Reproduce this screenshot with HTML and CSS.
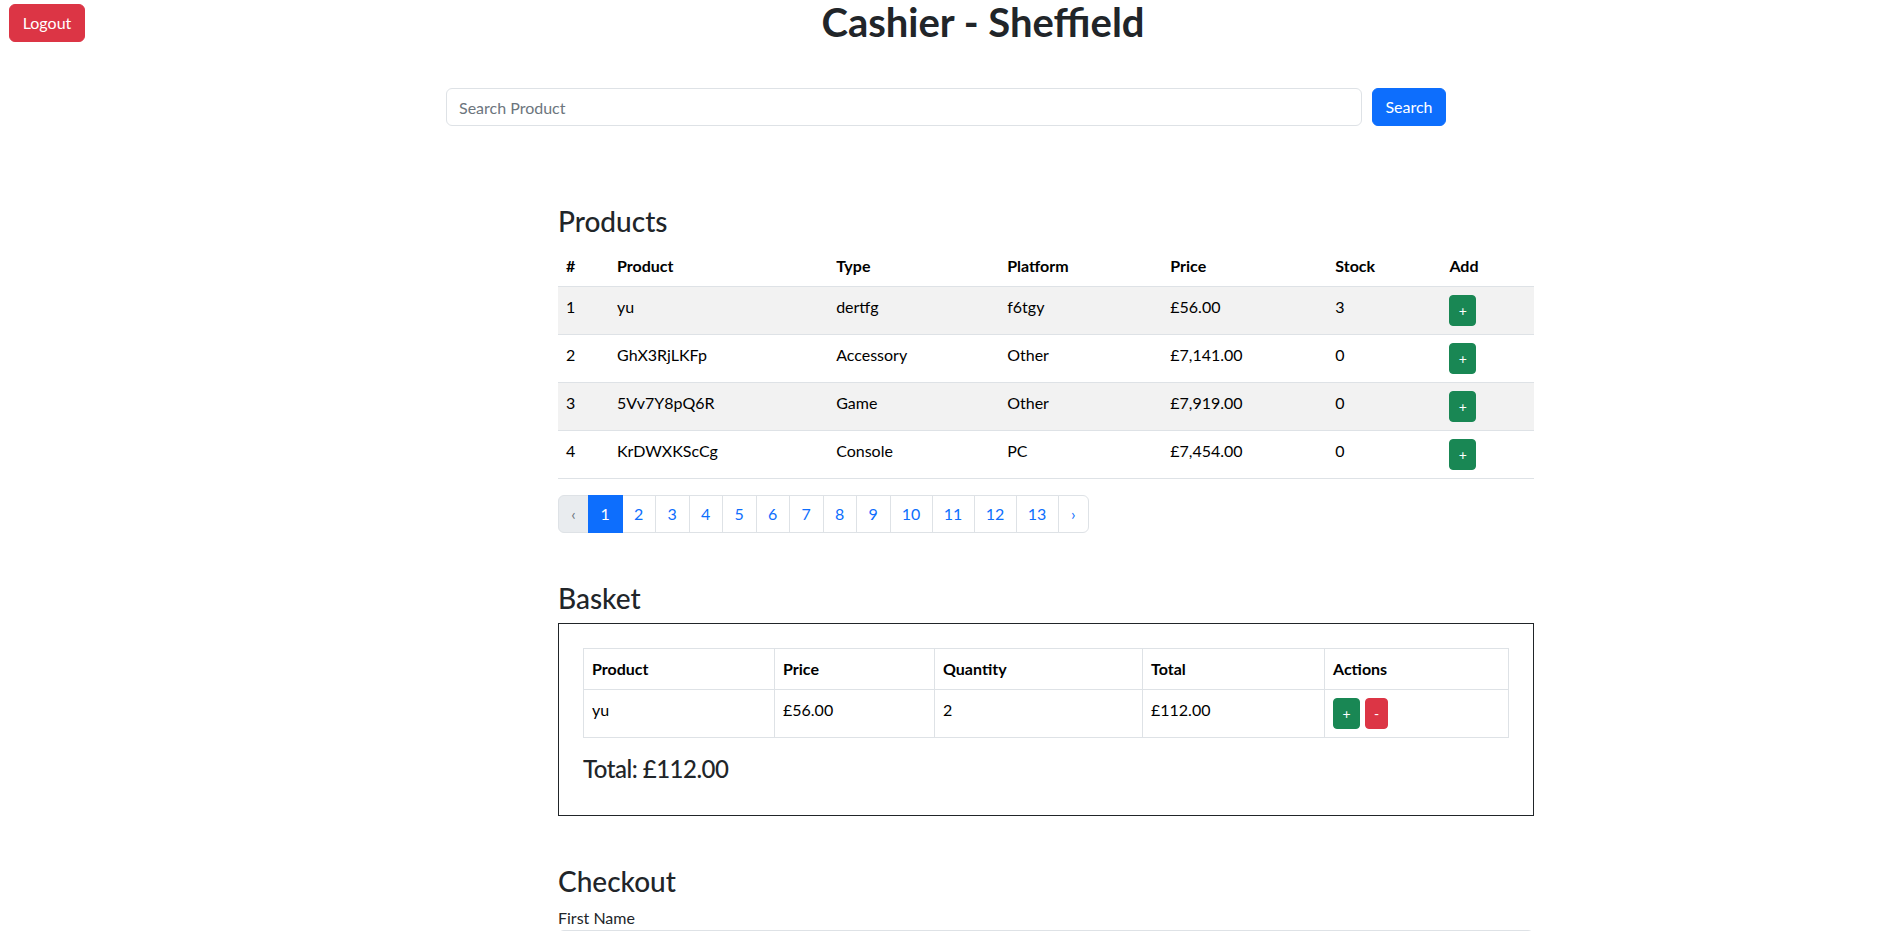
FILE: index.html
```html
<!DOCTYPE html>
<html lang="en">
<head>
<meta charset="utf-8">
<title>Cashier - Sheffield</title>
<link rel="stylesheet" href="styles.css">
</head>
<body>
<header class="topbar">
  <button class="btn btn-danger btn-logout">Logout</button>
  <h1 class="page-title">Cashier - Sheffield</h1>
</header>

<form class="search-row">
  <input class="form-control search-input" type="text" placeholder="Search Product">
  <button class="btn btn-primary btn-search" type="button">Search</button>
</form>

<main class="content">
  <section class="products">
    <h3 class="section-title">Products</h3>
    <table class="table table-striped products-table">
      <thead>
        <tr>
          <th class="c-num">#</th>
          <th class="c-prod">Product</th>
          <th class="c-type">Type</th>
          <th class="c-plat">Platform</th>
          <th class="c-price">Price</th>
          <th class="c-stock">Stock</th>
          <th class="c-add">Add</th>
        </tr>
      </thead>
      <tbody>
        <tr><td>1</td><td>yu</td><td>dertfg</td><td>f6tgy</td><td>£56.00</td><td>3</td><td><button class="btn btn-success btn-sm btn-plus">+</button></td></tr>
        <tr><td>2</td><td>GhX3RjLKFp</td><td>Accessory</td><td>Other</td><td>£7,141.00</td><td>0</td><td><button class="btn btn-success btn-sm btn-plus">+</button></td></tr>
        <tr><td>3</td><td>5Vv7Y8pQ6R</td><td>Game</td><td>Other</td><td>£7,919.00</td><td>0</td><td><button class="btn btn-success btn-sm btn-plus">+</button></td></tr>
        <tr><td>4</td><td>KrDWXKScCg</td><td>Console</td><td>PC</td><td>£7,454.00</td><td>0</td><td><button class="btn btn-success btn-sm btn-plus">+</button></td></tr>
      </tbody>
    </table>
    <ul class="pagination">
      <li class="page-item disabled"><span class="page-link pl-arrow">‹</span></li>
      <li class="page-item active"><span class="page-link pl-1">1</span></li>
      <li class="page-item"><a class="page-link pl-1">2</a></li>
      <li class="page-item"><a class="page-link pl-1">3</a></li>
      <li class="page-item"><a class="page-link pl-1">4</a></li>
      <li class="page-item"><a class="page-link pl-1">5</a></li>
      <li class="page-item"><a class="page-link pl-1">6</a></li>
      <li class="page-item"><a class="page-link pl-1">7</a></li>
      <li class="page-item"><a class="page-link pl-1">8</a></li>
      <li class="page-item"><a class="page-link pl-1">9</a></li>
      <li class="page-item"><a class="page-link pl-2">10</a></li>
      <li class="page-item"><a class="page-link pl-2">11</a></li>
      <li class="page-item"><a class="page-link pl-2">12</a></li>
      <li class="page-item"><a class="page-link pl-2">13</a></li>
      <li class="page-item"><a class="page-link pl-arrow">›</a></li>
    </ul>
  </section>

  <section class="basket">
    <h3 class="section-title">Basket</h3>
    <div class="basket-box">
      <table class="table table-bordered basket-table">
        <thead>
          <tr>
            <th class="b-prod">Product</th>
            <th class="b-price">Price</th>
            <th class="b-qty">Quantity</th>
            <th class="b-total">Total</th>
            <th class="b-act">Actions</th>
          </tr>
        </thead>
        <tbody>
          <tr>
            <td>yu</td>
            <td>£56.00</td>
            <td>2</td>
            <td>£112.00</td>
            <td><div class="actions"><button class="btn btn-success btn-sm btn-plus">+</button><button class="btn btn-danger btn-sm btn-minus">-</button></div></td>
          </tr>
        </tbody>
      </table>
      <h4 class="basket-total">Total: £112.00</h4>
    </div>
  </section>

  <section class="checkout">
    <h3 class="section-title">Checkout</h3>
    <label class="field-label" for="fname">First Name</label>
    <input class="form-control" id="fname" type="text">
  </section>
</main>
</body>
</html>
```

FILE: styles.css
```css
* { box-sizing: border-box; }

html, body {
  margin: 0;
  padding: 0;
}

body {
  font-family: "Lato", "Open Sans", "Noto Sans", sans-serif;
  font-size: 16px;
  line-height: 1.5;
  color: #212529;
  background: #fff;
}

/* buttons */
.btn {
  display: inline-block;
  font-family: inherit;
  font-size: 16px;
  line-height: 24px;
  padding: 6px 12px;
  border: 1px solid transparent;
  border-radius: 6px;
  color: #fff;
  text-align: center;
  cursor: pointer;
}
.btn-danger { background: #dc3545; border-color: #dc3545; }
.btn-primary { background: #0d6efd; border-color: #0d6efd; }
.btn-success { background: #198754; border-color: #198754; }
.btn-sm {
  font-size: 14px;
  line-height: 21px;
  padding: 4px 0;
  border-radius: 4px;
}
.btn-plus { width: 27px; }
.btn-minus { width: 23px; }

/* header */
.topbar {
  display: flex;
  align-items: flex-start;
  height: 44px;
}
.btn-logout {
  margin: 4px 0 0 9px;
  width: 76px;
  height: 38px;
  padding: 6px 0;
}
.page-title {
  flex: 1;
  margin: 0;
  padding-right: 6px;
  text-align: center;
  font-size: 40px;
  line-height: 44px;
  font-weight: 700;
  color: #212529;
}

/* search */
.search-row {
  display: flex;
  gap: 10px;
  width: 1000px;
  margin: 44px 0 0 446px;
}
.form-control {
  display: block;
  width: 100%;
  height: 38px;
  padding: 6px 12px;
  font-family: inherit;
  font-size: 16px;
  line-height: 24px;
  color: #212529;
  background: #fff;
  border: 1px solid #dee2e6;
  border-radius: 6px;
}
.form-control::placeholder { color: #6c757d; }
.search-input { flex: 1; }
.btn-search { width: 74px; height: 38px; padding: 6px 0; flex: none; }

/* content column */
.content {
  width: 975.5px;
  margin-left: 558px;
}
.section-title {
  margin: 0 0 8px;
  font-size: 28px;
  line-height: 34px;
  font-weight: 500;
  color: #212529;
}
.products { margin-top: 78px; }
.basket { margin-top: 48px; }
.checkout { margin-top: 48px; }

/* tables */
.table {
  width: 100%;
  border-collapse: collapse;
  table-layout: fixed;
  color: #000;
  margin-bottom: 16px;
}
.table th, .table td {
  padding: 8px;
  text-align: left;
  vertical-align: top;
  border-bottom: 1px solid #dee2e6;
}
.table th { font-weight: 700; }
.table-striped tbody tr:nth-child(odd) td { background: #f2f2f2; }

.c-num { width: 51px; }
.c-prod { width: 219px; }
.c-type { width: 171px; }
.c-plat { width: 163px; }
.c-price { width: 165px; }
.c-stock { width: 114px; }
.c-add { width: 92px; }

.table-bordered th, .table-bordered td { border: 1px solid #dee2e6; }
.b-prod { width: 191px; }
.b-price { width: 160px; }
.b-qty { width: 208px; }
.b-total { width: 182px; }
.b-act { width: 184px; }

.actions { display: flex; gap: 5px; }

/* pagination */
.pagination {
  display: flex;
  list-style: none;
  margin: 0 0 16px;
  padding: 0;
}
.page-item { margin-left: -1px; }
.page-item:first-child { margin-left: 0; }
.page-link {
  display: block;
  height: 38px;
  padding: 6px 0;
  text-align: center;
  font-size: 16px;
  line-height: 24px;
  color: #0d6efd;
  background: #fff;
  border: 1px solid #dee2e6;
  text-decoration: none;
}
.pl-arrow { width: 31px; }
.pl-1 { width: 34.5px; }
.pl-2 { width: 43px; }
.page-item:first-child .page-link { border-radius: 6px 0 0 6px; }
.page-item:last-child .page-link { border-radius: 0 6px 6px 0; width: 31.5px; }
.page-item.active .page-link {
  background: #0d6efd;
  border-color: #0d6efd;
  color: #fff;
  position: relative;
}
.page-item.disabled .page-link {
  background: #e9ecef;
  color: #6c757d;
}

/* basket */
.basket-box {
  border: 1px solid #212529;
  padding: 24px;
}
.basket-total {
  margin: 0 0 8px;
  font-size: 24px;
  line-height: 29px;
  font-weight: 500;
  letter-spacing: -0.5px;
  color: #212529;
}

/* checkout */
.field-label {
  display: block;
  line-height: 24px;
}
```
